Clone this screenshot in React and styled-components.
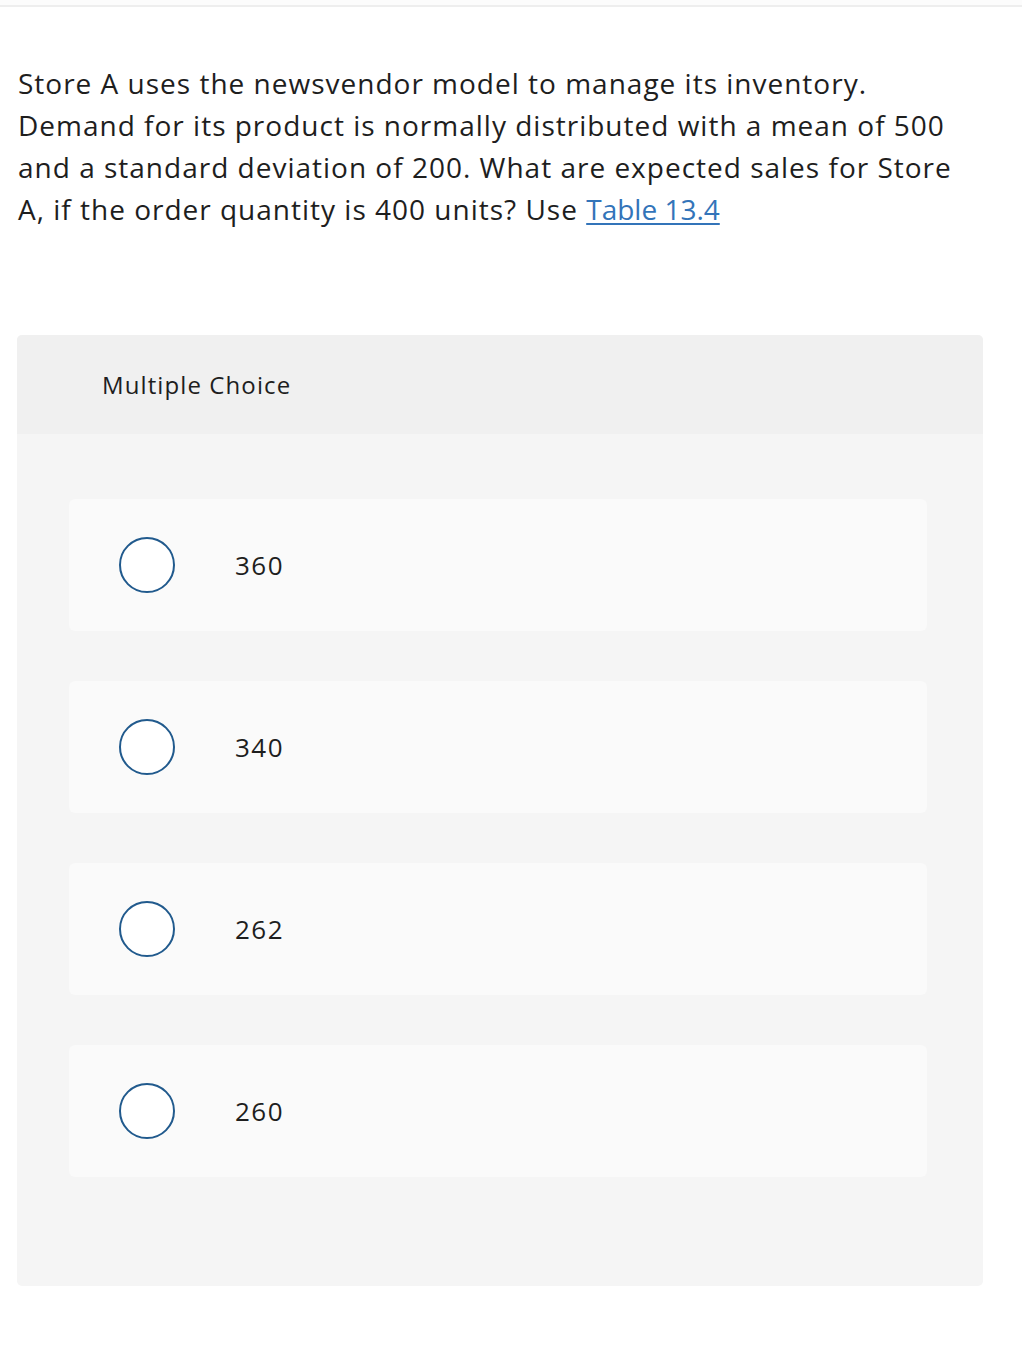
import React from "react";
import styled, { createGlobalStyle } from "styled-components";

const GlobalStyle = createGlobalStyle`
  body {
    margin: 0;
    background: #ffffff;
    font-family: "Open Sans", Lato, Arial, sans-serif;
    color: #1e1e1e;
  }
`;

const TopBar = styled.div`
  height: 5px;
  background: #fcfcfc;
  border-bottom: 2px solid #eeeeee;
`;

const Page = styled.div`
  padding: 0 39px 60px 17px;
`;

const Question = styled.p`
  margin: 55px 0 0 1px;
  max-width: 950px;
  font-size: 28px;
  line-height: 42px;
  letter-spacing: 1px;
  color: #1e1e1e;
`;

const TableLink = styled.a`
  color: #3374b9;
  letter-spacing: 0;
  text-decoration: underline;
  text-underline-offset: 3px;
`;

const Card = styled.section`
  margin-top: 105px;
  border-radius: 5px;
  background: #f5f5f5;
  overflow: hidden;
`;

const CardHeader = styled.div`
  height: 99px;
  display: flex;
  align-items: center;
  padding-left: 85px;
  background: #f0f0f0;
  font-size: 24px;
  letter-spacing: 1.1px;
  color: #1e1e1e;
`;

const Options = styled.div`
  display: flex;
  flex-direction: column;
  gap: 50px;
  padding: 65px 56px 109px 52px;
`;

const Option = styled.label`
  height: 132px;
  display: flex;
  align-items: center;
  background: #fafafa;
  border-radius: 6px;
  padding-left: 50px;
  cursor: pointer;
`;

const Radio = styled.span`
  width: 52px;
  height: 52px;
  border-radius: 50%;
  border: 2px solid #215a8d;
  background: #ffffff;
  flex: none;
`;

const OptionText = styled.span`
  margin-left: 60px;
  font-size: 26px;
  letter-spacing: 1.5px;
  color: #1e1e1e;
`;

const choices = ["360", "340", "262", "260"];

export default function App() {
  return (
    <>
      <GlobalStyle />
      <TopBar />
      <Page>
        <Question>
          Store A uses the newsvendor model to manage its inventory. Demand for
          its product is normally distributed with a mean of 500 and a standard
          deviation of 200. What are expected sales for Store A, if the order
          quantity is 400 units? Use <TableLink href="#">Table 13.4</TableLink>
        </Question>
        <Card>
          <CardHeader>Multiple Choice</CardHeader>
          <Options>
            {choices.map((c) => (
              <Option key={c}>
                <Radio />
                <OptionText>{c}</OptionText>
              </Option>
            ))}
          </Options>
        </Card>
      </Page>
    </>
  );
}
